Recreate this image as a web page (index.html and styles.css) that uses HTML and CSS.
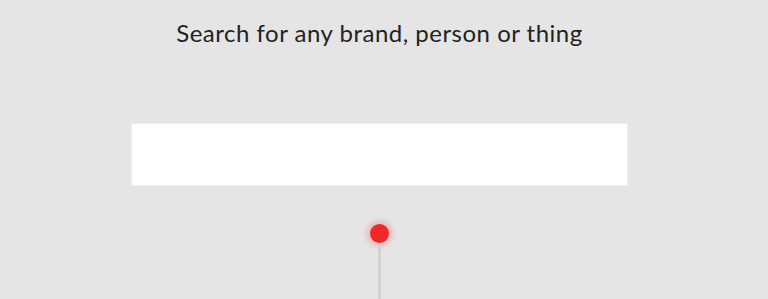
FILE: index.html
```html
<!DOCTYPE html>
<html>
<head>
<meta charset="utf-8">
<link rel="stylesheet" href="styles.css">
</head>
<body>
<main class="page">
  <h1 class="title">Search for any brand, person or thing</h1>
  <input class="search" type="text" aria-label="Search">
  <div class="pin">
    <span class="dot"></span>
    <span class="stem"></span>
  </div>
</main>
</body>
</html>
```
FILE: styles.css
```css
html, body {
  margin: 0;
  padding: 0;
  height: 100%;
  overflow: hidden;
  background: #e5e5e5;
}
.page {
  width: 759px;
  display: flex;
  flex-direction: column;
  align-items: center;
  font-family: "Lato", "Noto Sans", sans-serif;
}
.title {
  margin: 18px 0 0 0;
  font-size: 24px;
  font-weight: 400;
  line-height: 30px;
  color: #222;
  letter-spacing: 0.5px;
}
.search {
  margin-top: 75px;
  width: 497px;
  height: 63px;
  box-sizing: border-box;
  border: 1px solid #eeeeee;
  background: #fff;
  outline: none;
  padding: 0 12px;
  font: inherit;
}
.pin {
  margin-top: 38px;
  display: flex;
  flex-direction: column;
  align-items: center;
}
.dot {
  width: 19px;
  height: 19px;
  border-radius: 50%;
  background: #f02828;
  box-shadow: 0 0 4px 4px rgba(240, 60, 60, 0.2);
}
.stem {
  width: 3px;
  height: 60px;
  background: #d2d2d2;
  margin-top: 2px;
}
```
